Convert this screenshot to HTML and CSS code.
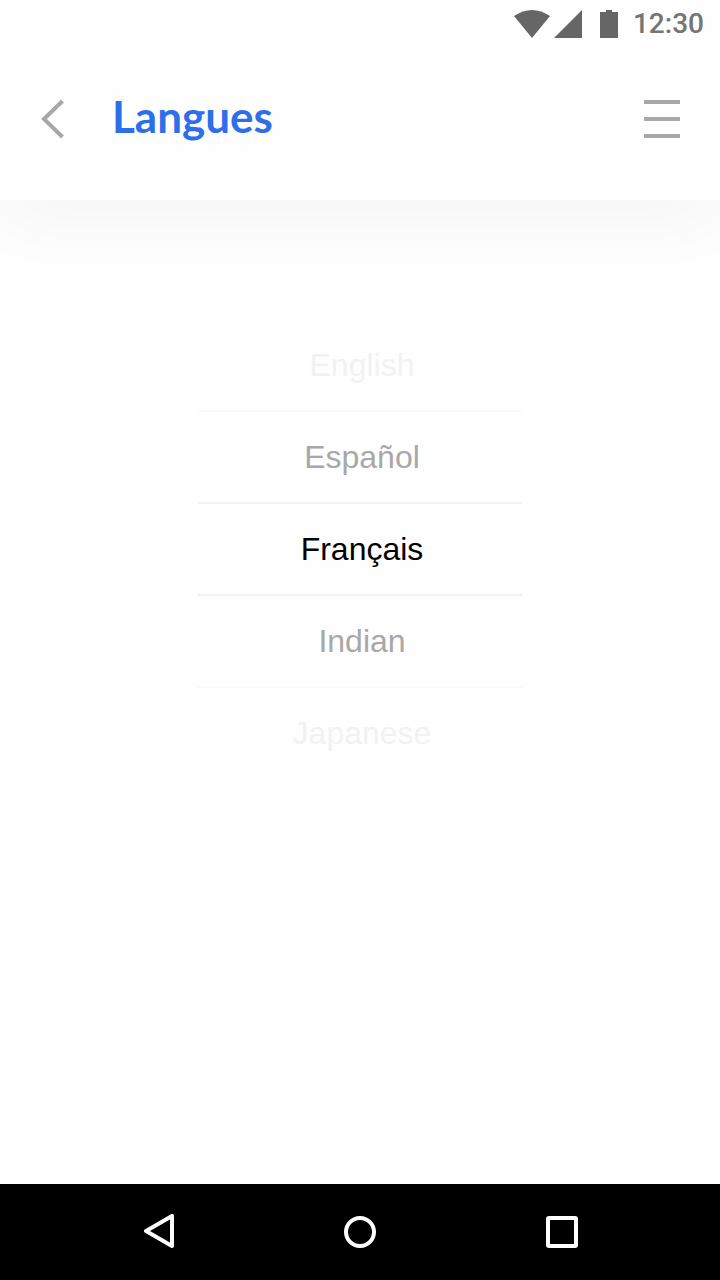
FILE: index.html
```html
<!DOCTYPE html>
<html lang="fr">
<head>
<meta charset="utf-8">
<meta name="viewport" content="width=device-width, initial-scale=1">
<title>Langues</title>
<link rel="stylesheet" href="styles.css">
</head>
<body class="screen">
  <div class="top">
    <div class="status-bar">
      <svg class="status-icon" width="90" height="48" viewBox="0 0 90 48" aria-hidden="true">
        <path d="M0 16Q18 4 36 16L18 38Z"/>
        <path d="M68 10V38H40Z"/>
      </svg>
      <svg class="status-icon" width="18" height="48" viewBox="0 0 18 48" aria-hidden="true">
        <path d="M0 12H6V10H12V12H18V38H0Z"/>
      </svg>
      <span class="clock">12:30</span>
    </div>
    <header class="header">
      <button class="icon-button" type="button" aria-label="Retour">
        <svg width="24" height="40" viewBox="0 0 24 40" aria-hidden="true"><path class="line" d="M22.500 2L4 20L22.500 38"/></svg>
      </button>
      <h1 class="title">Langues</h1>
      <button class="icon-button" type="button" aria-label="Menu">
        <svg width="36" height="40" viewBox="0 0 36 40" aria-hidden="true"><path class="line" d="M0 3H36M0 20H36M0 37H36"/></svg>
      </button>
    </header>
  </div>
  <main class="content">
    <ul class="picker">
      <li class="picker-row row-soft"><button class="option option-far" type="button">English</button></li>
      <li class="picker-row"><button class="option option-near" type="button">Español</button></li>
      <li class="picker-row"><button class="option" type="button" aria-pressed="true">Français</button></li>
      <li class="picker-row row-soft"><button class="option option-near" type="button">Indian</button></li>
      <li class="picker-row row-last"><button class="option option-far" type="button">Japanese</button></li>
    </ul>
  </main>
  <nav class="nav-bar" aria-label="Navigation">
    <button class="nav-button" type="button" aria-label="Précédent">
      <svg width="36" height="36" viewBox="0 0 36 36" aria-hidden="true"><path class="nav-line" d="M32 2V32L6 17Z"/></svg>
    </button>
    <button class="nav-button" type="button" aria-label="Accueil">
      <svg width="36" height="36" viewBox="0 0 36 36" aria-hidden="true"><circle class="nav-line" cx="18" cy="18" r="14"/></svg>
    </button>
    <button class="nav-button" type="button" aria-label="Applications récentes">
      <svg width="36" height="36" viewBox="0 0 36 36" aria-hidden="true"><rect class="nav-line" x="4" y="4" width="28" height="28" rx="1"/></svg>
    </button>
  </nav>
</body>
</html>
```
FILE: styles.css
```css
* {
  box-sizing: border-box;
}

.screen {
  margin: 0;
  min-height: 100vh;
  display: flex;
  flex-direction: column;
  background: #fefefe;
  font-family: "Liberation Sans", Arial, sans-serif;
}

button {
  padding: 0;
  border: 0;
  background: none;
  font: inherit;
  color: inherit;
}

svg {
  display: block;
}

.top {
  background: #fefefe;
  box-shadow: 0 20px 70px rgba(0, 0, 0, 0.04);
}

.status-bar {
  display: flex;
  justify-content: flex-end;
  align-items: center;
  height: 48px;
  padding: 0 16px;
}

.status-icon {
  flex: none;
  fill: #666;
}

.status-icon:first-child {
  margin-right: -4px;
}

.clock {
  margin-left: 15px;
  font: 500 28px/48px Roboto, sans-serif;
  color: #757575;
}

.header {
  display: flex;
  align-items: center;
  padding: 51px 40px 61px;
}

.icon-button {
  flex: none;
}

.line {
  fill: none;
  stroke: #a8a8a8;
  stroke-width: 4;
}

.title {
  flex: 1;
  margin: 0;
  padding: 0 48px 6px;
  font: 700 44px/34px Lato, sans-serif;
  color: #2f6eea;
}

.content {
  flex: 1;
  padding: 120px 24px;
}

.picker {
  width: 100%;
  max-width: 324px;
  margin: 0 auto;
  padding: 0;
  list-style: none;
}

.picker-row {
  border-bottom: 2px solid #f2f2f2;
}

.row-soft {
  border-color: #f9f9f9;
}

.row-last {
  border-color: transparent;
}

.option {
  display: block;
  width: 100%;
  height: 90px;
  padding-left: 4px;
  font-size: 32px;
  line-height: 90px;
  text-align: center;
  color: #000;
}

.option-near {
  color: #a8a8a8;
}

.option-far {
  color: #f2f2f2;
}

.nav-bar {
  display: grid;
  grid-template-columns: repeat(3, 1fr);
  padding: 0 8%;
  background: #000;
}

.nav-button {
  display: flex;
  justify-content: center;
  align-items: center;
  height: 96px;
}

.nav-line {
  fill: none;
  stroke: #fff;
  stroke-width: 4;
  stroke-linejoin: round;
}
```
